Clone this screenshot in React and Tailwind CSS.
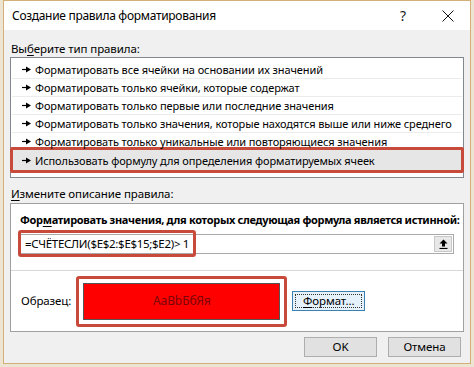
import React from "react";

const rules = [
    "Форматировать все ячейки на основании их значений",
    "Форматировать только ячейки, которые содержат",
    "Форматировать только первые или последние значения",
    "Форматировать только значения, которые находятся выше или ниже среднего",
    "Форматировать только уникальные или повторяющиеся значения",
    "Использовать формулу для определения форматируемых ячеек",
];

const Arrow = () => (
    <svg width="9" height="7" viewBox="0 0 9 7" className="shrink-0">
        <path d="M0 3.5H5" stroke="#000" strokeWidth="1.2" />
        <path d="M4 0.5L9 3.5L4 6.5Z" fill="#000" />
    </svg>
);

const App = () => {
    return (
        <div className="w-[474px] h-[367px] bg-[#eee4d2] px-[3px] pb-[3px] font-['Noto_Sans',sans-serif] text-[11px] tracking-[-0.1px] text-black leading-none whitespace-nowrap">
            <div className="h-full border border-[#d3b07a] bg-[#f0f0f0] flex flex-col">
                {/* заголовок окна */}
                <div className="h-[29px] bg-white flex items-center pl-[8px]">
                    <span className="text-[12px] tracking-[-0.3px]">Создание правила форматирования</span>
                    <span className="ml-auto w-[44px] text-center text-[14px] text-[#222]">?</span>
                    <span className="w-[45px] flex justify-center">
                        <svg width="12" height="12" viewBox="0 0 12 12">
                            <path d="M0.5 0.5L11.5 11.5M11.5 0.5L0.5 11.5" stroke="#111" strokeWidth="1" />
                        </svg>
                    </span>
                </div>

                <div className="flex-1 px-[6px] flex flex-col">
                    <div className="h-[27px] flex items-end pb-[3px] pl-[1px] text-[11.5px]">
                        Вы<span className="underline underline-offset-2">б</span>ерите тип правила:
                    </div>

                    {/* список типов правил */}
                    <div className="h-[121px] bg-white border border-[#828790] pt-[3px] px-[1px]">
                        {rules.map((r, i) =>
                            i === rules.length - 1 ? (
                                <div
                                    key={i}
                                    className="h-[26px] -mt-[4px] -mx-[2px] border-[3px] border-[#c84a3b] rounded-[2px] bg-[#e6e6e6] flex items-center gap-[4px] pl-[9px]"
                                >
                                    <Arrow />
                                    <span>{r}</span>
                                </div>
                            ) : (
                                <div key={i} className="h-[18px] border-b border-[#ececec] flex items-center gap-[4px] pl-[10px]">
                                    <Arrow />
                                    <span>{r}</span>
                                </div>
                            )
                        )}
                    </div>

                    <div className="h-[25px] flex items-end pb-[4px] pl-[1px] text-[11.5px]">
                        <span className="underline underline-offset-2">И</span>змените описание правила:
                    </div>

                    {/* описание правила */}
                    <div className="h-[129px] bg-white border border-[#a0a0a0] flex flex-col">
                        <div className="pl-[9px] pt-[10px] font-bold tracking-[-0.32px]">
                            Фор<span className="underline underline-offset-2">м</span>атировать значения, для которых следующая формула является истинной:
                        </div>
                        <div className="mt-[9px] ml-[8px] mr-[9px] h-[20px] border border-[#a9a9a9] flex items-center relative">
                            <span className="absolute left-[-2px] top-[-5px] h-[27px] px-[4px] border-[3px] border-[#c84a3b] rounded-[3px] flex items-center text-[11.5px] tracking-[-0.3px]">
                                =СЧЁТЕСЛИ($E$2:$E$15;$E2)&gt; 1
                            </span>
                            <span className="ml-auto mr-[1px] w-[18px] h-[16px] bg-[#e8e8e8] border border-[#c8c8c8] flex items-center justify-center">
                                <svg width="9" height="10" viewBox="0 0 9 10">
                                    <path d="M4.5 0.5L8.5 4.5H6V7.5H3V4.5H0.5Z" fill="#000" />
                                    <path d="M0.5 9.5H8.5" stroke="#000" strokeWidth="1.2" />
                                </svg>
                            </span>
                        </div>
                        <div className="mt-[16px] border-t border-[#d8d8d8] flex-1 flex items-center pl-[10px]">
                            <span className="text-[11.5px]">Образец:</span>
                            <div className="ml-[5px] w-[211px] h-[51px] border-[3px] border-[#c84a3b] rounded-[3px] bg-white p-[4px]">
                                <div className="h-full border border-[#555] bg-[#ff0000] flex items-center justify-center text-[#7a0606] text-[12px]">
                                    AaBbБбЯя
                                </div>
                            </div>
                            <div className="ml-[5px] w-[73px] h-[20px] border border-[#3c7fb1] bg-[#e5f1fb] p-[2px]">
                                <div className="h-full border border-dotted border-[#333] flex items-center justify-center text-[11.5px]">
                                    <span className="underline underline-offset-2">Ф</span>ормат...
                                </div>
                            </div>
                        </div>
                    </div>

                    {/* кнопки */}
                    <div className="flex justify-end gap-[11px] mt-[5px] pr-[3px]">
                        <button className="w-[73px] h-[20px] bg-[#e1e1e1] border border-[#adadad] text-[11.5px]">OK</button>
                        <button className="w-[73px] h-[20px] bg-[#e1e1e1] border border-[#adadad] text-[11.5px]">Отмена</button>
                    </div>
                </div>
            </div>
        </div>
    );
};

export default App;
